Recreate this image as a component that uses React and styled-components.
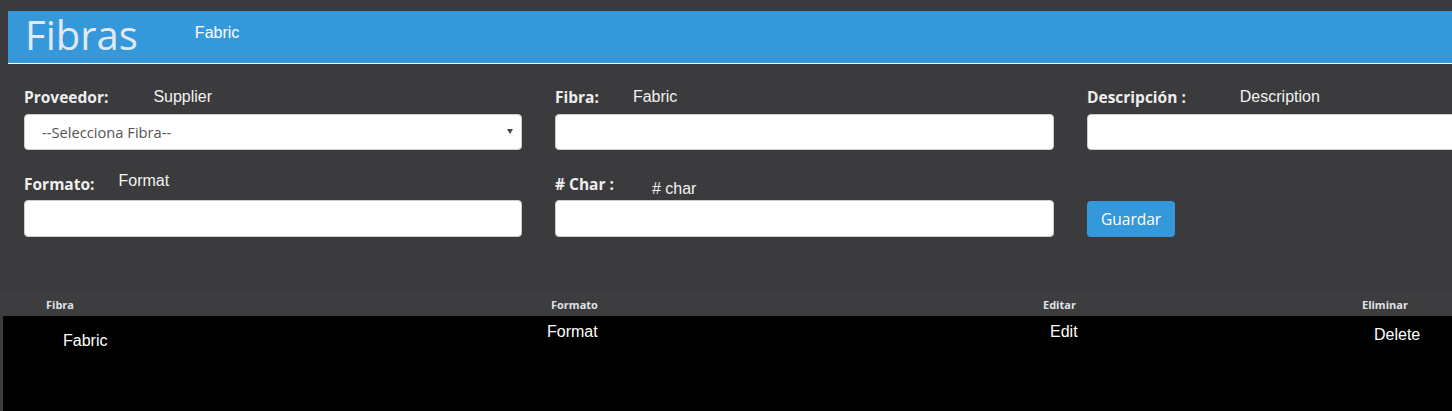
import React from "react";
import styled, { createGlobalStyle } from "styled-components";

const Global = createGlobalStyle`
  html, body { margin: 0; padding: 0; }
  body {
    background: #3b3b3d;
    overflow-x: hidden;
    font-family: "Open Sans", sans-serif;
  }
`;

const Page = styled.div`
  width: 1452px;
  min-height: 411px;
  overflow: hidden;
`;

const Header = styled.header`
  margin: 11px 0 0 8px;
  height: 52px;
  background: #3498db;
  border-bottom: 1px solid #ffffff;
  display: flex;
  align-items: center;
  padding-left: 17px;
`;

const Title = styled.h1`
  margin: 0;
  font-family: "Open Sans", sans-serif;
  font-weight: 400;
  font-size: 40px;
  line-height: 52px;
  color: #e1e9f1;
  position: relative;
  top: -2px;
`;

const Subtitle = styled.span`
  margin-left: 57px;
  font-family: "Liberation Sans", Arial, sans-serif;
  font-size: 16px;
  color: #ffffff;
  position: relative;
  top: -4px;
`;

const Form = styled.div`
  padding: 22px 0 0 24px;
  display: grid;
  grid-template-columns: 531px 532px 498px;
  row-gap: 22px;
`;

const Field = styled.div`
  width: ${(p) => p.$w || 498}px;
  display: flex;
  flex-direction: column;
  gap: 6px;
`;

const LabelRow = styled.div`
  display: flex;
  align-items: flex-start;
  height: 22px;
`;

const Label = styled.label`
  font-family: "Open Sans", sans-serif;
  font-weight: 700;
  font-size: 15.5px;
  line-height: 22px;
  color: #eeeeee;
  margin-top: ${(p) => p.$top || 0}px;
`;

const Value = styled.span`
  font-family: "Liberation Sans", Arial, sans-serif;
  font-size: 16px;
  line-height: 22px;
  color: #f2f2f2;
  margin-left: ${(p) => p.$gap}px;
  margin-top: ${(p) => p.$top || 0}px;
`;

const Input = styled.input`
  box-sizing: border-box;
  width: 100%;
  height: ${(p) => p.$h || 36}px;
  border: 1px solid #cccccc;
  border-radius: 4px;
  background: #ffffff;
  padding: 0 12px;
  font-family: "Liberation Sans", Arial, sans-serif;
  font-size: 14px;
  outline: none;
`;

const SelectBox = styled.div`
  box-sizing: border-box;
  height: 36px;
  border: 1px solid #cccccc;
  border-radius: 4px;
  background: #ffffff;
  display: flex;
  align-items: center;
  justify-content: space-between;
  padding: 0 8px 0 17px;
  font-family: "Open Sans", sans-serif;
  font-size: 14.7px;
  color: #555555;
`;

const Caret = styled.span`
  width: 0;
  height: 0;
  border-left: 3px solid transparent;
  border-right: 3px solid transparent;
  border-top: 5px solid #444444;
  margin-top: -2px;
`;

const Button = styled.button`
  align-self: flex-start;
  margin-top: 1px;
  height: 36px;
  padding: 0 14px;
  border: none;
  border-radius: 4px;
  background: #3498db;
  color: #ffffff;
  font-family: "Open Sans", sans-serif;
  font-size: 15.5px;
  cursor: pointer;
`;

const Table = styled.div`
  margin-top: 55px;
`;

const cols = "537px 495px 315px 1fr";

const HeadRow = styled.div`
  display: grid;
  grid-template-columns: ${cols};
  height: 24px;
  align-items: center;
  padding-left: 3px;
  background: #3d3d3f;
`;

const HeadCell = styled.div`
  padding-left: ${(p) => p.$pad}px;
  font-family: "Open Sans", sans-serif;
  font-weight: 700;
  font-size: 11px;
  color: #dfe3e6;
`;

const Body = styled.div`
  margin-left: 3px;
  background: #000000;
  min-height: 95px;
`;

const Row = styled.div`
  display: grid;
  grid-template-columns: ${cols};
  align-items: start;
`;

const Cell = styled.div`
  padding-left: ${(p) => p.$pad}px;
  padding-top: ${(p) => p.$top}px;
  font-family: "Liberation Sans", Arial, sans-serif;
  font-size: 16px;
  line-height: 18px;
  color: #ffffff;
`;

export default function App() {
  return (
    <Page>
      <Global />
      <Header>
        <Title>Fibras</Title>
        <Subtitle>Fabric</Subtitle>
      </Header>

      <Form>
        <Field>
          <LabelRow>
            <Label>Proveedor:</Label>
            <Value $gap={45}>Supplier</Value>
          </LabelRow>
          <SelectBox>
            <span>--Selecciona Fibra--</span>
            <Caret />
          </SelectBox>
        </Field>
        <Field $w={499}>
          <LabelRow>
            <Label>Fibra:</Label>
            <Value $gap={34}>Fabric</Value>
          </LabelRow>
          <Input />
        </Field>
        <Field>
          <LabelRow>
            <Label>Descripción :</Label>
            <Value $gap={54}>Description</Value>
          </LabelRow>
          <Input />
        </Field>

        <Field>
          <LabelRow>
            <Label $top={1}>Formato:</Label>
            <Value $gap={24} $top={-2}>Format</Value>
          </LabelRow>
          <Input $h={37} />
        </Field>
        <Field $w={499}>
          <LabelRow>
            <Label $top={1}>{"# Char :"}</Label>
            <Value $gap={38} $top={6}># char</Value>
          </LabelRow>
          <Input $h={37} />
        </Field>
        <Field>
          <LabelRow />
          <Button>Guardar</Button>
        </Field>
      </Form>

      <Table>
        <HeadRow>
          <HeadCell $pad={43}>Fibra</HeadCell>
          <HeadCell $pad={11}>Formato</HeadCell>
          <HeadCell $pad={8}>Editar</HeadCell>
          <HeadCell $pad={12}>Eliminar</HeadCell>
        </HeadRow>
        <Body>
          <Row>
            <Cell $pad={60} $top={16}>Fabric</Cell>
            <Cell $pad={7} $top={7}>Format</Cell>
            <Cell $pad={15} $top={7}>Edit</Cell>
            <Cell $pad={24} $top={10}>Delete</Cell>
          </Row>
        </Body>
      </Table>
    </Page>
  );
}
